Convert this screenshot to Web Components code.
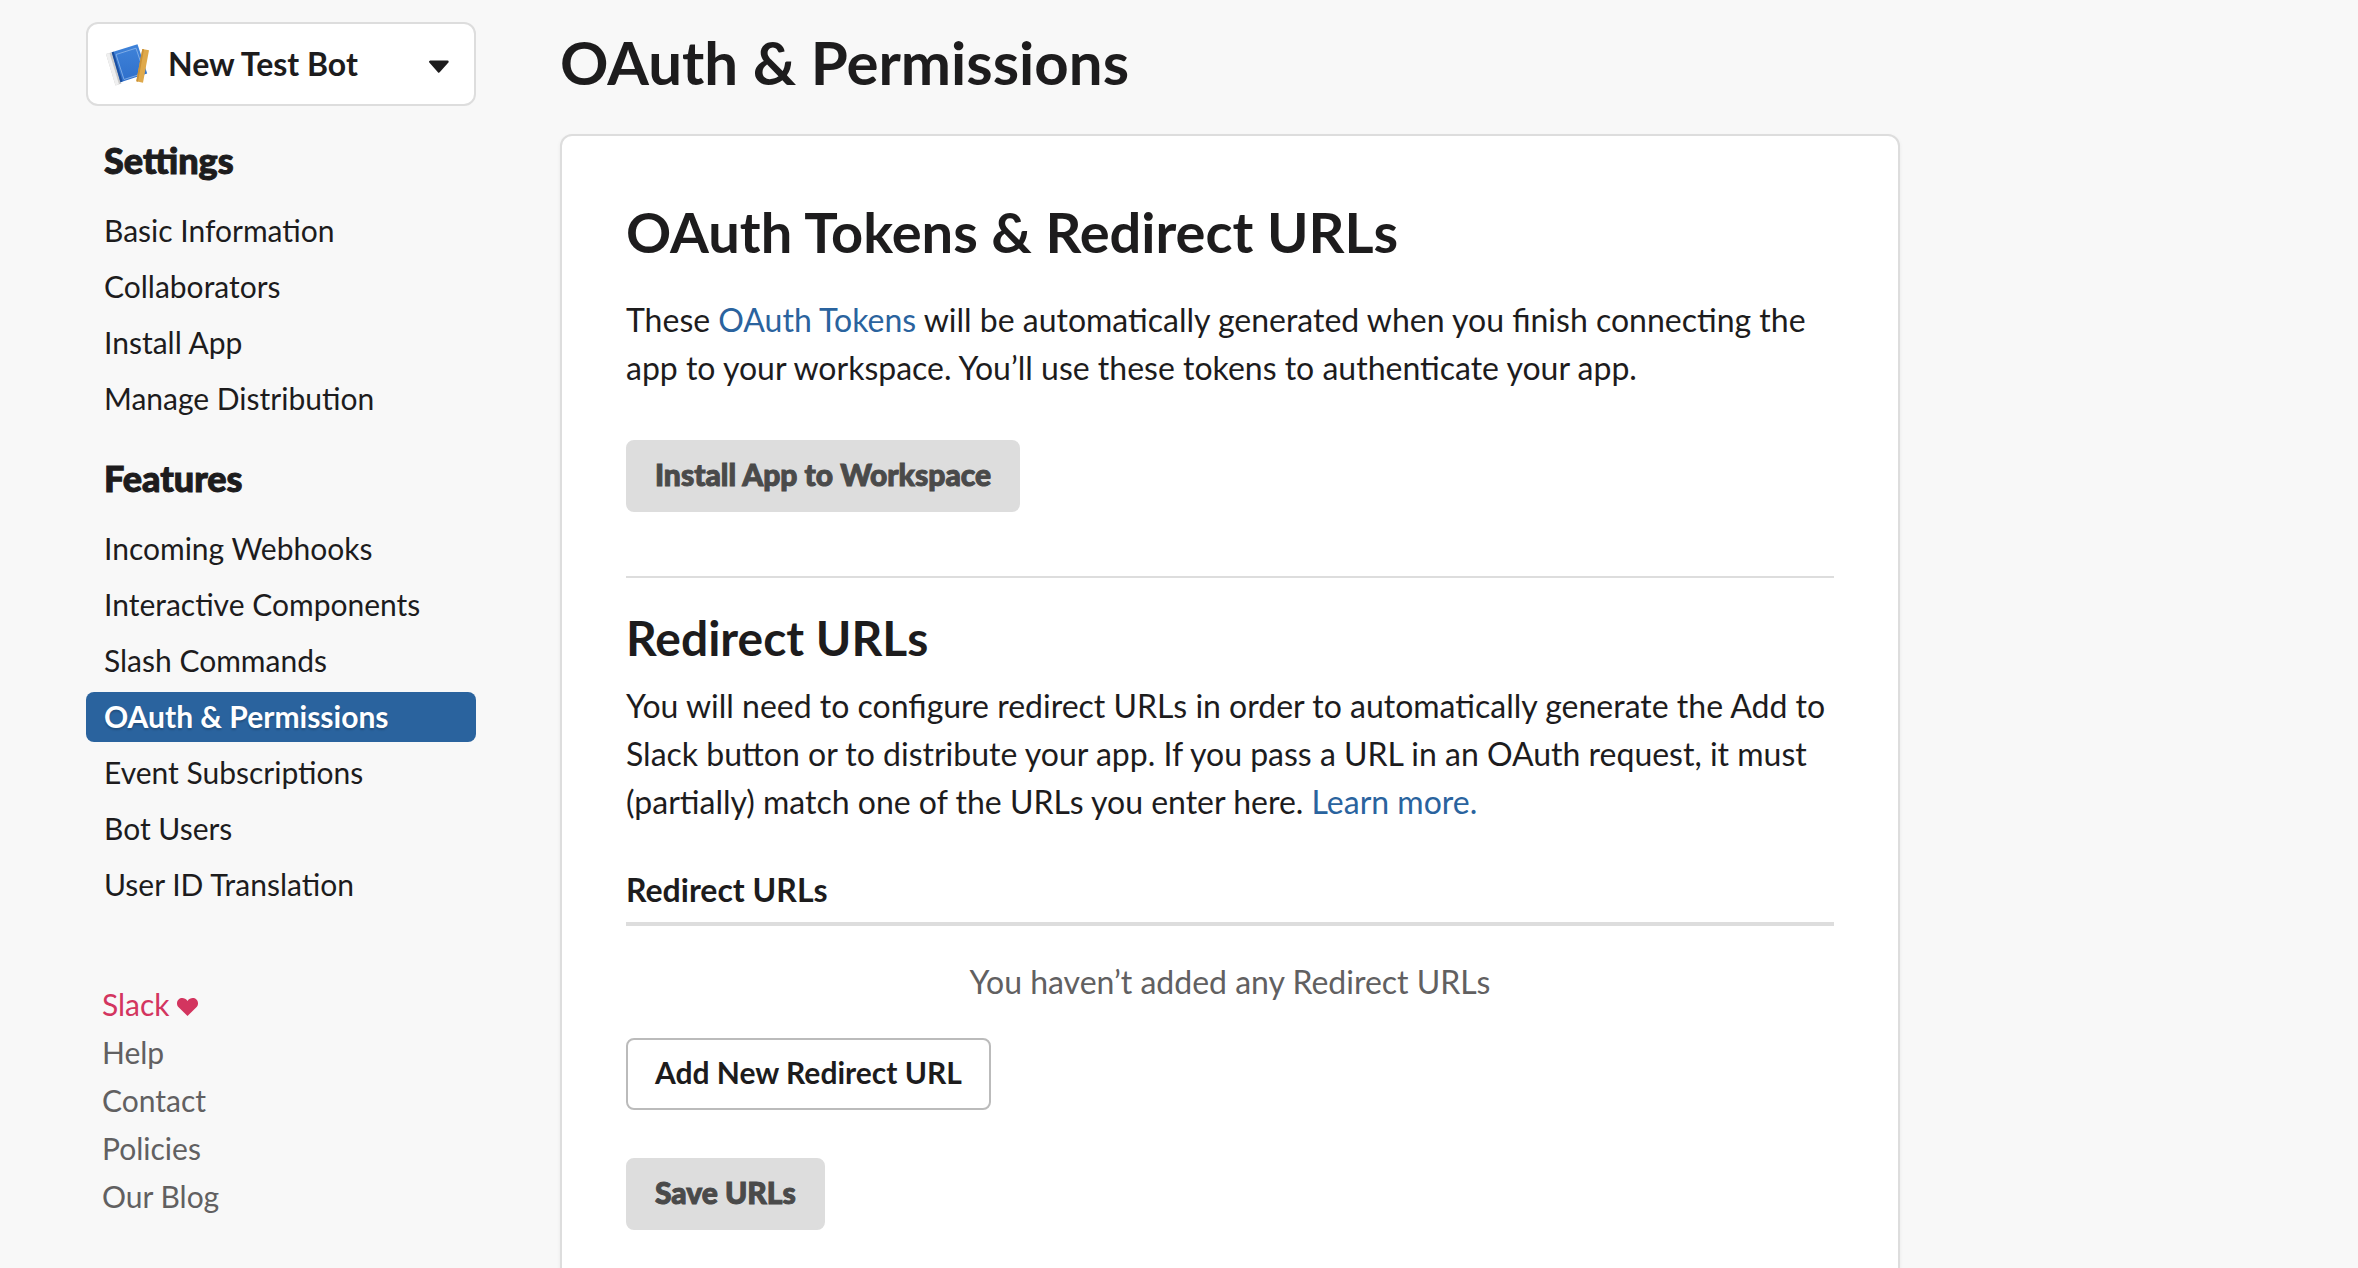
<!DOCTYPE html>
<html lang="en">
<head>
<meta charset="utf-8">
<meta name="viewport" content="width=device-width, initial-scale=1">
<title>OAuth &amp; Permissions</title>
<style>
  html { scrollbar-width: none; }
  body {
    margin: 0;
    background: #f8f8f8;
    color: #1d1c1d;
    font: 400 32px/48px Lato, "Liberation Sans", sans-serif;
    -webkit-font-smoothing: antialiased;
  }
</style>
</head>
<body>
<app-shell>
  <side-bar slot="side">
    <app-picker name="New Test Bot"></app-picker>
    <nav-group heading="Settings">
      <nav-item>Basic Information</nav-item>
      <nav-item>Collaborators</nav-item>
      <nav-item>Install App</nav-item>
      <nav-item>Manage Distribution</nav-item>
    </nav-group>
    <nav-group heading="Features">
      <nav-item>Incoming Webhooks</nav-item>
      <nav-item>Interactive Components</nav-item>
      <nav-item>Slash Commands</nav-item>
      <nav-item active>OAuth &amp; Permissions</nav-item>
      <nav-item>Event Subscriptions</nav-item>
      <nav-item>Bot Users</nav-item>
      <nav-item>User ID Translation</nav-item>
    </nav-group>
    <footer-links></footer-links>
  </side-bar>
  <page-title>OAuth &amp; Permissions</page-title>
  <content-card>
    <card-section level="1" heading="OAuth Tokens &amp; Redirect URLs">
      <p-text>These <text-link>OAuth Tokens</text-link> will be automatically generated when you finish connecting the app to your workspace. You’ll use these tokens to authenticate your app.</p-text>
      <ui-button disabled>Install App to Workspace</ui-button>
    </card-section>
    <card-section level="2" heading="Redirect URLs">
      <p-text>You will need to configure redirect URLs in order to automatically generate the Add to Slack button or to distribute your app. If you pass a URL in an OAuth request, it must (partially) match one of the URLs you enter here. <text-link>Learn more.</text-link></p-text>
      <url-table></url-table>
      <ui-button>Add New Redirect URL</ui-button>
      <ui-button disabled>Save URLs</ui-button>
    </card-section>
  </content-card>
</app-shell>

<script>
const define = (name, markup, setup) => customElements.define(name, class extends HTMLElement {
  connectedCallback() {
    if (this.shadowRoot) return;
    const root = this.attachShadow({ mode: 'open' });
    root.innerHTML = markup;
    if (setup) setup(this, root);
  }
});

define('app-shell', `
  <style>
    :host { display: flex; align-items: flex-start; gap: 84px; padding: 22px 86px 64px; }
    aside { flex: 0 0 390px; }
    main { flex: 1 1 0; min-width: 0; max-width: 1340px; }
  </style>
  <aside><slot name="side"></slot></aside>
  <main><slot></slot></main>`);

define('side-bar', `
  <style>:host { display: flex; flex-direction: column; gap: 30px; }</style>
  <slot></slot>`);

define('app-picker', `
  <style>
    :host { display: block; }
    .box { display: grid; grid-template: 80px / 1fr; align-items: center; border: 2px solid #ddd; border-radius: 12px; background: #fff; }
    .box > * { grid-area: 1 / 1; }
    select { appearance: none; width: 100%; height: 80px; margin: 0; padding: 0 64px 0 80px; border: 0; border-radius: 12px; background: none; color: inherit; font: 700 32px/48px Lato, sans-serif; }
    svg { pointer-events: none; }
    .logo { margin-left: 16px; }
    .caret { justify-self: end; margin-right: 24px; }
  </style>
  <div class="box">
    <select aria-label="App"><option></option></select>
    <svg class="logo" width="48" height="48" viewBox="0 0 48 48" aria-hidden="true">
      <defs>
        <linearGradient id="b" x1="0" y1="0" x2="0" y2="1"><stop offset="0" stop-color="#3f83d9"/><stop offset="1" stop-color="#2f6fcb"/></linearGradient>
      </defs>
      <path d="M2 14 L7.700 12.300 L17.500 43.500 L11.500 45.500 Z" fill="#c9c9c9"/>
      <path d="M2 14 L5.500 13 L15 44.300 L11.500 45.500 Z" fill="#f0f0f0"/>
      <path d="M7.700 12.300 L33.500 4.200 L43.200 33.500 L16.500 42.200 Z" fill="url(#b)"/>
      <path d="M7.700 12.300 L9.700 11.700 L18.500 41.500 L16.500 42.200 Z" fill="#1c4f9e"/>
      <path d="M12 14.500 L32 8.200 L40 32 M12 14.500 L20 39.500 L34 35" fill="none" stroke="#8fb8ea" stroke-width=".8"/>
      <path d="M38.300 9 L45 10.300 L39 42.700 L32.300 41.300 Z" fill="#dfa94b"/>
      <path d="M38.300 9 L40 9.300 L34 41.700 L32.300 41.300 Z" fill="#c99138"/>
    </svg>
    <svg class="caret" width="24" height="24" viewBox="0 0 24 24" aria-hidden="true"><path d="M4.200 9.800 H21.500 L12.800 19.500 Z" fill="#1d1c1d" stroke="#1d1c1d" stroke-width="2.400" stroke-linejoin="round"/></svg>
  </div>`,
  (el, root) => { root.querySelector('option').textContent = el.getAttribute('name'); });

define('nav-group', `
  <style>
    :host { display: block; }
    h2 { margin: 0 0 22px; padding: 0 18px; font: 900 36px/48px Lato, sans-serif; -webkit-text-stroke: 1px currentColor; }
    nav { display: flex; flex-direction: column; gap: 6px; }
  </style>
  <h2></h2><nav><slot></slot></nav>`,
  (el, root) => { root.querySelector('h2').textContent = el.getAttribute('heading'); });

define('nav-item', `
  <style>
    :host { display: block; }
    a { display: block; padding: 0 18px 2px; border-radius: 8px; color: inherit; font-size: 30px; line-height: 48px; text-decoration: none; }
    :host([active]) a { background: #2a639e; color: #fff; font-weight: 700; text-shadow: 0 2px 2px rgba(0, 0, 0, .2); }
  </style>
  <a href="#"><slot></slot></a>`);

define('footer-links', `
  <style>
    :host { display: block; padding: 40px 16px 0; font-size: 30px; color: #616061; }
    ul { margin: 0; padding: 0; list-style: none; }
    a { color: inherit; text-decoration: none; }
    .love { color: #d3355f; }
  </style>
  <ul>
    <li><a class="love" href="#">Slack <svg width="21" height="18" viewBox="0 0 21 18" aria-hidden="true"><path d="M10.500 18 L1.600 9.300 C-.6 7-.5 3.500 1.600 1.500 C4-.6 8-.5 10.500 3 C13-.5 17-.6 19.400 1.500 C21.500 3.500 21.600 7 19.400 9.300 Z" fill="currentColor"/></svg></a></li>
    <li><a href="#">Help</a></li>
    <li><a href="#">Contact</a></li>
    <li><a href="#">Policies</a></li>
    <li><a href="#">Our Blog</a></li>
  </ul>`);

define('page-title', `
  <style>
    :host { display: block; }
    h1 { margin: 0 0 32px; font: 700 60px/80px Lato, sans-serif; }
  </style>
  <h1><slot></slot></h1>`);

define('content-card', `
  <style>
    :host { display: block; padding: 64px; border: 2px solid #ddd; border-radius: 12px; background: #fff; box-shadow: 0 2px 4px rgba(0, 0, 0, .06); }
  </style>
  <slot></slot>`);

define('card-section', `
  <style>
    :host { display: flex; flex-direction: column; align-items: flex-start; gap: 48px; }
    :host([level="2"]) { margin-top: 64px; padding-top: 30px; border-top: 2px solid #ddd; }
    h2, h3 { margin: 0; }
    h2 { margin-bottom: -16px; font: 700 56px/64px Lato, sans-serif; }
    h3 { margin-bottom: -34px; font: 700 48px/60px Lato, sans-serif; }
  </style>
  <slot></slot>`,
  (el, root) => {
    const h = document.createElement(el.getAttribute('level') === '1' ? 'h2' : 'h3');
    h.textContent = el.getAttribute('heading');
    root.querySelector('slot').before(h);
  });

define('p-text', `
  <style>:host { display: block; } p { margin: 0; }</style>
  <p><slot></slot></p>`);

define('text-link', `
  <style>:host { display: inline; } a { color: #2a639e; text-decoration: none; }</style>
  <a href="#"><slot></slot></a>`);

define('ui-button', `
  <style>
    :host { display: block; }
    button { display: block; height: 72px; margin: 0; padding: 0 27px 4px; border: 2px solid #bbb; border-radius: 8px; background: #fff; color: inherit; font: 700 30px/48px Lato, sans-serif; }
    button:disabled { border-color: #ddd; background: #ddd; color: #4a4a4a; font-weight: 900; -webkit-text-stroke: 1px currentColor; }
  </style>
  <button type="button"><slot></slot></button>`,
  (el, root) => { root.querySelector('button').disabled = el.hasAttribute('disabled'); });

define('url-table', `
  <style>
    :host { display: block; align-self: stretch; margin: -8px 0 -16px; }
    table { width: 100%; border-collapse: separate; border-spacing: 0; }
    th { padding: 0 0 8px; border-bottom: 4px solid #ddd; font-weight: 700; text-align: left; }
    td { padding: 32px 0 0; color: #616061; text-align: center; }
  </style>
  <table>
    <thead><tr><th scope="col">Redirect URLs</th></tr></thead>
    <tbody><tr><td>You haven’t added any Redirect URLs</td></tr></tbody>
  </table>`);
</script>
</body>
</html>
